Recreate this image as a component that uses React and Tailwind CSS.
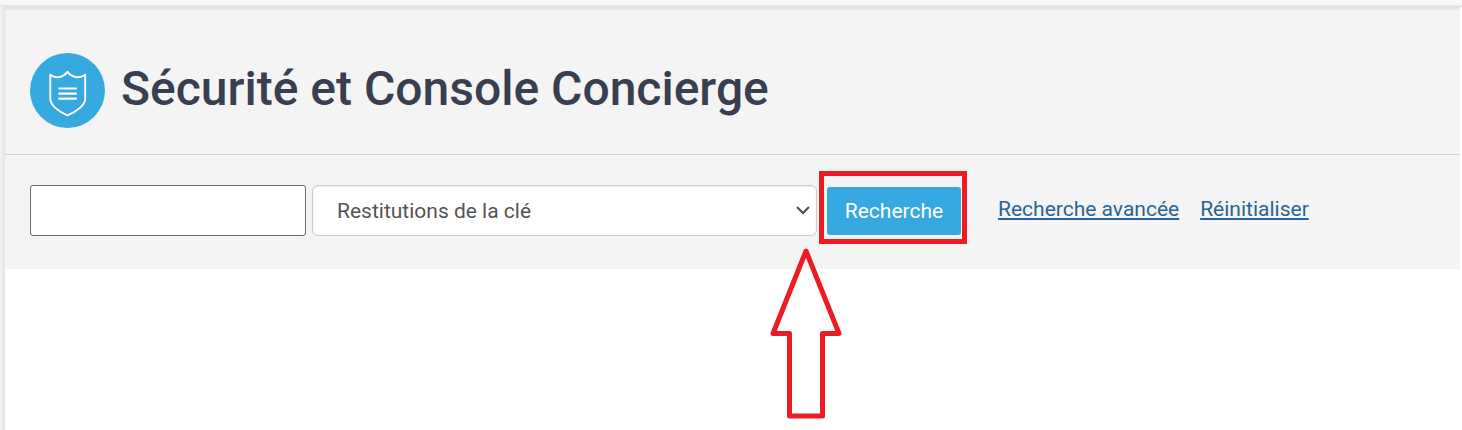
import { useState } from "react";

const KEY_FILTERS = [
  "Restitutions de la clé",
  "Remises de la clé",
  "Visiteurs",
  "Colis",
];

function ShieldIcon() {
  return (
    <svg
      viewBox="0 0 75 75"
      className="size-[75px] shrink-0"
      fill="none"
      aria-hidden="true"
    >
      <circle cx="37.5" cy="37.5" r="37.5" fill="#37a9e1" />
      <path
        d="M37.5 18.7C34.5 23.5 26.5 26.5 20.3 21.8V45.5C20.3 52 28 58.5 37.5 62.3C47 58.5 55.2 52 55.2 45.5V21.8C48.5 26.5 40.5 23.5 37.5 18.7Z"
        stroke="#fff"
        strokeWidth="1.9"
        strokeLinejoin="round"
      />
      <path
        d="M29.2 35.5H46M29.2 40.6H46M29.2 45.7H46"
        stroke="#fff"
        strokeWidth="2.2"
        strokeLinecap="round"
      />
    </svg>
  );
}

function SearchHighlight() {
  return (
    <div className="pointer-events-none absolute -inset-x-2 -top-4 -bottom-[9px] mr-[2px] border-5 border-[#ed1c24]">
      <svg
        viewBox="0 0 76 174"
        className="absolute top-[70px] -left-[56px] h-[174px] w-[76px]"
        aria-hidden="true"
      >
        <path
          d="M38 5L71 87.500H54.500V170H21.500V87.500H5L38 5Z"
          fill="none"
          stroke="#ed1c24"
          strokeWidth="5"
          strokeLinejoin="round"
        />
      </svg>
    </div>
  );
}

export default function App() {
  const [query, setQuery] = useState("");
  const [filter, setFilter] = useState(KEY_FILTERS[0]);

  const handleSubmit = (e) => {
    e.preventDefault();
  };

  const handleReset = (e) => {
    e.preventDefault();
    setQuery("");
    setFilter(KEY_FILTERS[0]);
  };

  return (
    <div className="flex min-h-screen flex-col overflow-hidden bg-white font-[Roboto,sans-serif]">
      <div className="h-[7px] border-b-2 border-[#e6e6e6] bg-[#f7f7f7]" />
      <div className="flex grow pr-[2px]">
        <div className="w-[5px] shrink-0 bg-linear-to-r from-[#f3f3f3] to-[#e3e3e3]" />
        <main className="min-w-0 grow">
          <header className="flex items-center gap-4 border-b border-[#cfcfcf] bg-[#f4f4f4] px-[25px] pt-[46px] pb-[26px] shadow-[inset_0_3px_3px_-1px_#dedede]">
            <ShieldIcon />
            <h1 className="pb-1 text-[48px] leading-[56px] font-medium text-[#393f4f]">
              Sécurité et Console Concierge
            </h1>
          </header>

          <form
            onSubmit={handleSubmit}
            className="flex items-center bg-[#f4f4f4] px-[25px] pt-[30px] pb-[33px] text-[21px] leading-6"
          >
            <input
              type="text"
              aria-label="Recherche"
              value={query}
              onChange={(e) => setQuery(e.target.value)}
              className="h-[51px] w-[276px] rounded-[3px] border border-[#6b6b6b] bg-white px-3"
            />
            <div className="relative ml-[6px] w-[505px]">
              <select
                aria-label="Type"
                value={filter}
                onChange={(e) => setFilter(e.target.value)}
                className="block h-[51px] w-full appearance-none rounded-md border border-[#cccccc] bg-white px-6 text-[#555555] shadow-[inset_0_1px_2px_#00000013]"
              >
                {KEY_FILTERS.map((name) => (
                  <option key={name}>{name}</option>
                ))}
              </select>
              <svg
                viewBox="0 0 14 9"
                className="pointer-events-none absolute top-[21px] right-[7px] h-[9px] w-[14px]"
                fill="none"
                aria-hidden="true"
              >
                <path d="M1 1L7 7L13 1" stroke="#4d4d4d" strokeWidth="2" />
              </svg>
            </div>
            <div className="relative ml-[10px]">
              <button
                type="submit"
                className="block h-12 w-[134px] rounded-[3px] bg-[#37a9e1] text-white"
              >
                Recherche
              </button>
              <SearchHighlight />
            </div>
            <div className="ml-[37px] flex gap-[21px] pb-1 text-[#2a6496]">
              <a href="#avancee" className="underline">
                Recherche avancée
              </a>
              <a href="#reinitialiser" onClick={handleReset} className="underline">
                Réinitialiser
              </a>
            </div>
          </form>
        </main>
      </div>
    </div>
  );
}
